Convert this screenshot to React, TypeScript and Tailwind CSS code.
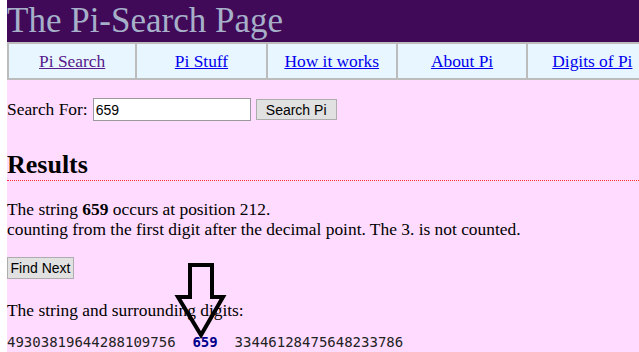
import React from 'react';

const navItems = [
    { label: 'Pi Search', visited: true },
    { label: 'Pi Stuff', visited: false },
    { label: 'How it works', visited: false },
    { label: 'About Pi', visited: false },
    { label: 'Digits of Pi', visited: false },
];

export default function App() {
    return (
        <div className="h-[352px] w-[639px] overflow-hidden bg-white pl-[7px]">
            <div className="relative h-full bg-[#ffdcff] font-['Liberation_Serif',serif] text-[17.4px] text-black">
                {/* header */}
                <h1 className="h-[42px] bg-[#410a59] text-[35px] leading-[42px] text-[#a6b0c9]">The Pi-Search Page</h1>

                {/* nav table */}
                <div className="flex h-[38px] border-y-2 border-[#bcbcbc] bg-[#e8f6ff]">
                    {navItems.map((item, i) => (
                        <div
                            key={item.label}
                            className={`flex w-[130.3px] shrink-0 items-center justify-center border-r-2 border-[#bcbcbc] ${i === 0 ? 'border-l-2' : ''}`}
                        >
                            <a
                                href="#"
                                className={`underline ${item.visited ? 'text-[#551a8b]' : 'text-[#0000ee]'}`}
                            >
                                {item.label}
                            </a>
                        </div>
                    ))}
                </div>

                {/* search form */}
                <div className="mt-[18px] flex h-[23px] items-center">
                    <span>Search For:</span>
                    <input
                        defaultValue="659"
                        className="ml-[5px] h-[23px] w-[158px] border border-[#9a9a9a] bg-white px-[2px] font-['Liberation_Sans',sans-serif] text-[14px] outline-none"
                    />
                    <button className="ml-[5px] h-[21px] w-[81px] border border-[#adadad] bg-[#e1e1e1] font-['Liberation_Sans',sans-serif] text-[14px] leading-none">
                        Search Pi
                    </button>
                </div>

                {/* results */}
                <h2 className="mt-[29px] h-[31px] border-b border-dotted border-[#ff3030] text-[26px] font-bold leading-[30px]">Results</h2>

                <p className="mt-[18px] leading-[20px]">
                    The string <b>659</b> occurs at position 212.
                    <br />
                    counting from the first digit after the decimal point. The 3. is not counted.
                </p>

                <button className="mt-[18px] block h-[22px] w-[67px] border border-[#adadad] bg-[#e1e1e1] font-['Liberation_Sans',sans-serif] text-[14px] leading-none">
                    Find Next
                </button>

                <p className="mt-[21px] leading-[20px]">The string and surrounding digits:</p>

                <div className="mt-[12px] whitespace-pre font-['DejaVu_Sans_Mono',monospace] text-[14px] leading-[20px] text-[#222]">
                    {'49303819644288109756  '}
                    <b className="text-[#00008b]">659</b>
                    {'  33446128475648233786'}
                </div>

                {/* arrow overlay */}
                <svg className="absolute left-[167px] top-[260px]" width="54" height="80" viewBox="0 0 54 80">
                    <polygon
                        points="16,5 38,5 38,37 49,37 27,75 4,37 16,37"
                        fill="none"
                        stroke="black"
                        strokeWidth="4"
                        strokeLinejoin="miter"
                    />
                </svg>
            </div>
        </div>
    );
}
